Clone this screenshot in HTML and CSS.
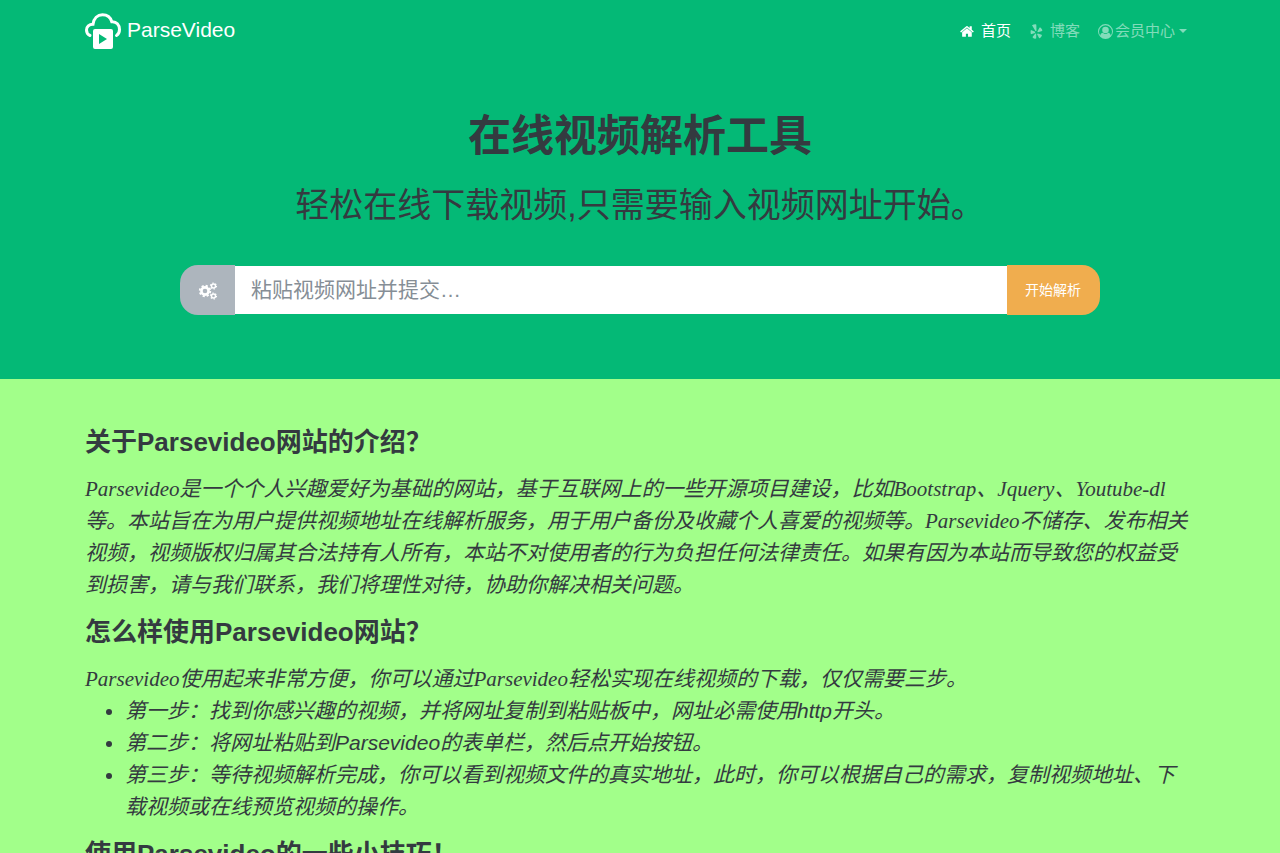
FILE: index.html
```html
<!DOCTYPE html>
<html lang="zh-CN">

<head>
    <meta charset="utf-8">
    <meta name="viewport" content="width=device-width, initial-scale=1">
    <title>ParseVideo</title>
    <link rel="stylesheet" href="styles.css">
</head>

<body>
    <header class="hero">
        <nav class="navbar container">
            <a class="brand" href="#">
                <svg class="logo" viewBox="0 0 36 36" aria-hidden="true">
                    <path d="M5 22.500C2.600 21.500 1.500 19.300 1.500 17c0-3.400 2.600-5.800 6.500-5.800C8.800 5.500 12.500 1.700 17.500 1.700c4.500 0 8 2.600 9.300 7C31.500 8.300 34.500 12 34.500 16.500c0 2.700-1 4.800-3 6" fill="none" stroke="#fff" stroke-width="3" stroke-linecap="round"/>
                    <path d="M10 16h16q2 0 2 2v16q0 2-2 2H10q-2 0-2-2V18q0-2 2-2zM14 21v10l8-5z" fill="#fff" fill-rule="evenodd"/>
                </svg>
                <span>ParseVideo</span>
            </a>
            <ul class="menu">
                <li><a class="menu-link active" href="#">
                    <svg class="icon" viewBox="0 0 1792 1792" aria-hidden="true"><path d="M1408 992v480q0 26-19 45t-45 19h-384v-384h-256v384h-384q-26 0-45-19t-19-45v-480q0-1 .5-3t.5-3l575-474 575 474q1 2 1 6zm223-69l-62 74q-8 9-21 11h-3q-13 0-21-7l-692-577-692 577q-12 8-24 7-13-2-21-11l-62-74q-8-10-7-23.5t11-21.5l719-599q32-26 76-26t76 26l244 204v-195q0-14 9-23t23-9h192q14 0 23 9t9 23v408l219 182q10 8 11 21.5t-7 23.5z"/></svg>
                    <span>首页</span></a></li>
                <li><a class="menu-link" href="#">
                    <svg class="icon" viewBox="0 0 16 16" aria-hidden="true"><path d="M3.200 1.200Q5 .2 7.200.3l.6.6.2 6.300-1 .4zM2 6.500l4.500 1.800v1.400L2 11q-.8-2 0-4.500zM7.700 10.300v5l-.8.500q-1.800-.2-3-1.400v-.8l2.900-3.600zM9.300 10l4.200 1.400.3.9q-.7 1.800-2.300 2.800l-.8-.1-2.100-4.200zM8.900 8l2.400-4.200.9-.1q1.400 1 2 2.800l-.2.9-4.500 1.300z"/></svg>
                    <span>博客</span></a></li>
                <li><a class="menu-link member" href="#">
                    <svg class="icon" viewBox="0 0 16 16" aria-hidden="true"><path d="M8 0a8 8 0 1 0 0 16A8 8 0 0 0 8 0zM13.600 12.300c-.4-1.800-1.300-2.800-2.800-2.900a4 4 0 0 1-5.600 0c-1.500.1-2.400 1.100-2.800 2.900a6.900 6.900 0 1 1 11.200 0zM8 2.900a3.500 3.500 0 1 0 0 7A3.500 3.500 0 0 0 8 2.900z" fill-rule="evenodd"/></svg>
                    <span>会员中心</span></a></li>
            </ul>
        </nav>

        <div class="hero-body container">
            <h1 class="title">在线视频解析工具</h1>
            <p class="lead">轻松在线下载视频,只需要输入视频网址开始。</p>
            <form class="search">
                <button class="setting" type="button" aria-label="设置">
                    <svg class="cogs" viewBox="0 0 20 18" aria-hidden="true">
                        <circle cx="7" cy="9" r="3.600" fill="none" stroke="#fff" stroke-width="2.600"/>
                        <circle cx="7" cy="9" r="5.300" fill="none" stroke="#fff" stroke-width="1.800" stroke-dasharray="2.200 1.963"/>
                        <circle cx="15.500" cy="4" r="2" fill="none" stroke="#fff" stroke-width="1.500"/>
                        <circle cx="15.500" cy="4" r="3" fill="none" stroke="#fff" stroke-width="1.200" stroke-dasharray="1.400 1.742"/>
                        <circle cx="15.500" cy="14" r="2" fill="none" stroke="#fff" stroke-width="1.500"/>
                        <circle cx="15.500" cy="14" r="3" fill="none" stroke="#fff" stroke-width="1.200" stroke-dasharray="1.400 1.742"/>
                    </svg>
                </button>
                <input class="url" type="text" name="url" aria-label="视频网址" placeholder="粘贴视频网址并提交…">
                <button class="submit" type="submit">开始解析</button>
            </form>
        </div>
    </header>

    <main class="content container">
        <h2>关于Parsevideo网站的介绍？</h2>
        <p>Parsevideo是一个个人兴趣爱好为基础的网站，基于互联网上的一些开源项目建设，比如Bootstrap、Jquery、Youtube-dl等。本站旨在为用户提供视频地址在线解析服务，用于用户备份及收藏个人喜爱的视频等。Parsevideo不储存、发布相关视频，视频版权归属其合法持有人所有，本站不对使用者的行为负担任何法律责任。如果有因为本站而导致您的权益受到损害，请与我们联系，我们将理性对待，协助你解决相关问题。</p>

        <h2>怎么样使用Parsevideo网站？</h2>
        <p>Parsevideo使用起来非常方便，你可以通过Parsevideo轻松实现在线视频的下载，仅仅需要三步。</p>
        <ul>
            <li>第一步：找到你感兴趣的视频，并将网址复制到粘贴板中，网址必需使用http开头。</li>
            <li>第二步：将网址粘贴到Parsevideo的表单栏，然后点开始按钮。</li>
            <li>第三步：等待视频解析完成，你可以看到视频文件的真实地址，此时，你可以根据自己的需求，复制视频地址、下载视频或在线预览视频的操作。</li>
        </ul>

        <h2>使用Parsevideo的一些小技巧！</h2>
    </main>
</body>
</html>
```
FILE: styles.css
```css
*{
    box-sizing: border-box;
}
body{
    margin: 0;
    background: #a2ff8a;
    color: #343a40;
    font-family: "Liberation Sans", "Noto Sans CJK SC", sans-serif;
    font-size: 21px;
    line-height: 32px;
}
.container{
    width: 100%;
    max-width: 1140px;
    margin: 0 auto;
    padding: 0 15px;
}

/* 顶部 */
.hero{
    background: #04b976;
    padding-bottom: 64px;
}
.navbar{
    display: flex;
    justify-content: space-between;
    align-items: center;
    height: 62px;
}
.brand{
    display: flex;
    align-items: center;
    gap: 6px;
    color: white;
    text-decoration: none;
}
.brand span{
    padding-bottom: 2px;
}
.logo{
    width: 36px;
    height: 36px;
}
.menu{
    display: flex;
    gap: 2px;
    list-style: none;
    margin: 0;
    padding: 0;
}
.menu-link{
    display: flex;
    align-items: center;
    gap: 6px;
    padding: 0 8px;
    color: rgba(255,255,255,.5);
    font-size: 15px;
    text-decoration: none;
}
.menu-link.active{
    color: white;
}
.menu-link.member{
    gap: 2px;
}
.icon{
    width: 15px;
    height: 15px;
    fill: currentColor;
}
.member::after{
    content: "";
    margin-left: 2px;
    border-top: 4px solid;
    border-left: 4px solid transparent;
    border-right: 4px solid transparent;
}

.hero-body{
    padding-top: 48px;
    text-align: center;
}
.title{
    margin: 0 0 18px;
    font-size: 43px;
    line-height: 52px;
}
.lead{
    margin: 0 0 34px;
    font-size: 34px;
    line-height: 51px;
}
.search{
    display: flex;
    align-items: center;
    max-width: 920px;
    margin: 0 auto;
}
.search button{
    height: 50px;
    border: none;
    color: white;
    font-family: inherit;
    font-size: 14px;
}
.search .setting{
    width: 55px;
    padding: 0;
    border-radius: 18px 0 0 18px;
    background: #adb5bd;
}
.cogs{
    display: block;
    width: 20px;
    height: 18px;
    margin: 2px auto 0;
}
.url{
    flex: 1;
    min-width: 0;
    height: 48px;
    padding: 0 16px;
    border: none;
    background: white;
    color: #495057;
    font-family: inherit;
    font-size: 21px;
}
.url::placeholder{
    color: #868e96;
}
.search .submit{
    padding: 0 19px 2px 18px;
    border-radius: 0 18px 18px 0;
    background: #f0ad4e;
}

/* 正文 */
.content{
    padding-top: 48px;
}
h2{
    margin: 0 0 15px;
    font-size: 26px;
    line-height: 31px;
}
.content p{
    margin: 0;
    font-family: "Liberation Serif", "Noto Sans CJK SC", serif;
    font-style: italic;
}
.content p + h2,
.content ul + h2{
    margin-top: 16px;
}
.content ul{
    margin: 0;
    padding-left: 40px;
    font-style: italic;
}
```
